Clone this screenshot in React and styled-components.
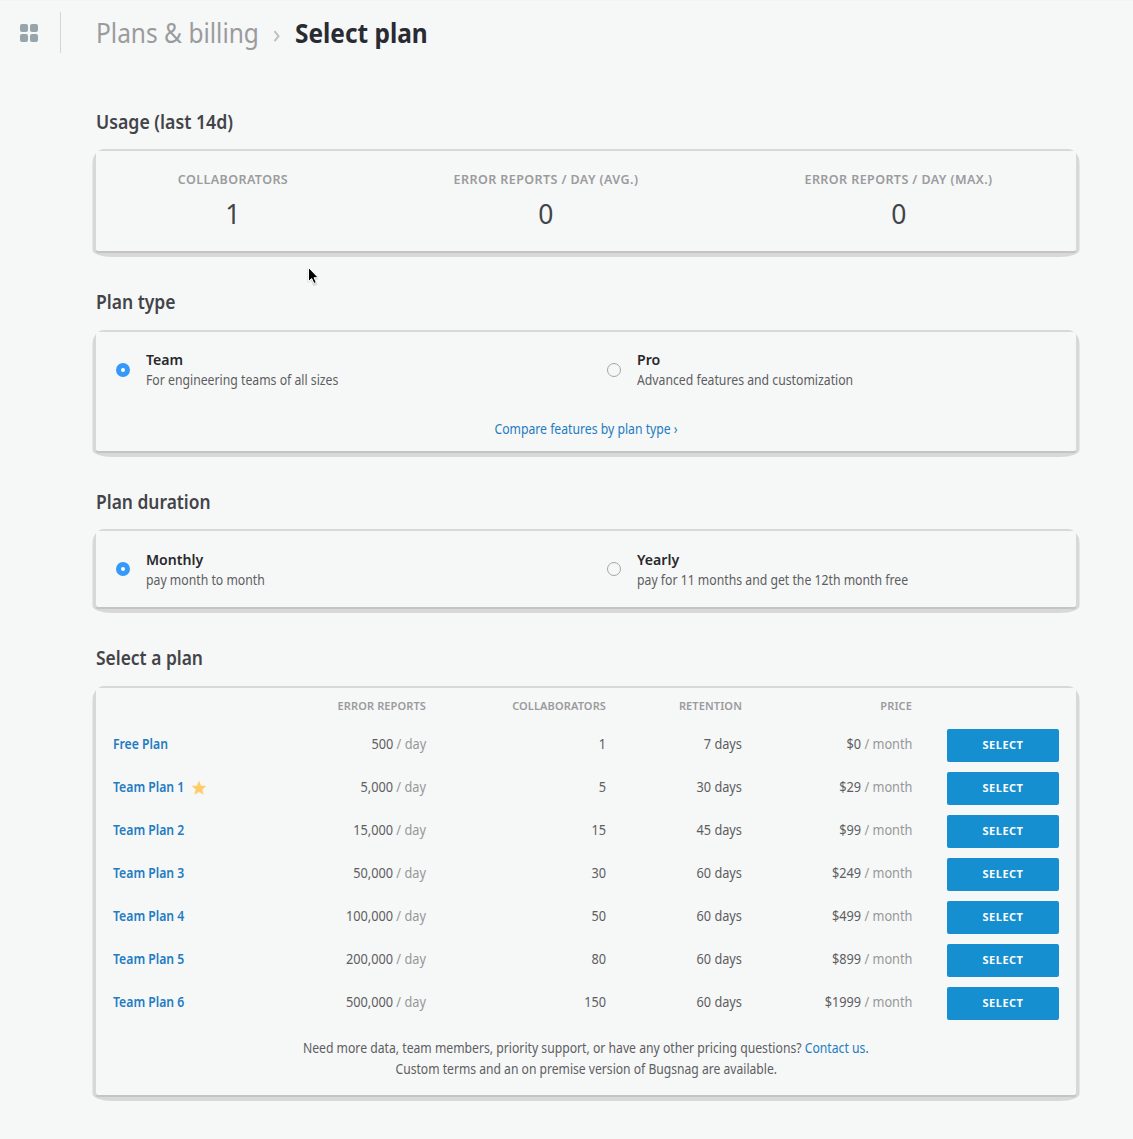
import React from "react";
import styled, { createGlobalStyle } from "styled-components";

const GlobalStyle = createGlobalStyle`
  * { box-sizing: border-box; }
  body {
    margin: 0;
    background: #f6f7f7;
    color: #5d5e62;
    font-family: "Noto Sans", "Open Sans", sans-serif;
    font-size: 14px;
    line-height: 21px;
  }
`;

const Page = styled.div`
  position: relative;
  width: 1133px;
  min-height: 1139px;
  overflow: hidden;
  border-top: 1px solid #f3f5f5;
`;

/* Narrowed text: keeps the full letter height at a condensed width. */
const Narrow = styled.span`
  display: inline-block;
  white-space: nowrap;
  transform: scaleX(${(p) => p.$by || 0.872});
  transform-origin: ${(p) => p.$from || "left"} center;
`;

const TopBar = styled.header`
  display: flex;
  align-items: center;
  height: 64px;
  padding-left: 20px;
`;

const MenuButton = styled.div`
  display: grid;
  grid-template-columns: 8px 8px;
  grid-auto-rows: 8px;
  gap: 2px;
  width: 18px;
`;

const MenuTile = styled.i`
  background: #98a4ab;
  border-radius: 2px;
`;

const Divider = styled.div`
  width: 1px;
  height: 41px;
  margin: 0 35px 2px 22px;
  background: #d3d5d6;
`;

const Breadcrumb = styled.nav`
  display: flex;
  align-items: center;
  font-size: 27px;
  line-height: 36px;
  color: #9b9b9e;
`;

const Crumb = styled.div`
  width: 176px;
`;

const Chevron = styled.svg`
  width: 10px;
  height: 14px;
  margin: 5px 13px 0 0;
`;

const Current = styled.h1`
  margin: 0;
  font: inherit;
  font-weight: 700;
  color: #292b33;
`;

const Main = styled.main`
  width: 988px;
  margin-left: 92px;
`;

const Section = styled.section`
  padding-top: ${(p) => p.$top}px;
`;

const Heading = styled.h2`
  margin: 0 0 ${(p) => p.$gap || 15}px 4px;
  font-size: 20px;
  line-height: 26px;
  font-weight: 600;
  color: #434449;
`;

const CardEdge = styled.div`
  padding: 2px 4px 6px;
  border-radius: 12px 12px 20px 20px / 16px 16px 8px 8px;
  background: linear-gradient(90deg, #e6e6e7 1px, #d8d8d9 1px, #d8d8d9 987px, #e6e6e7 987px);
`;

const Card = styled.div`
  height: ${(p) => p.$height}px;
  border-radius: 2px;
  background: #f6f7f7;
  box-shadow: 0 2px 0 #c4c4c6;
`;

const Stats = styled(Card)`
  display: grid;
  grid-template-columns: 274px 352px 353px;
  padding-top: 18px;
  text-align: center;
`;

const StatLabel = styled.div`
  font-size: 12.5px;
  line-height: 22px;
  font-weight: 600;
  letter-spacing: 0.42px;
  color: #9b9b9e;
`;

const StatValue = styled.div`
  margin-top: 5px;
  font-size: 27px;
  line-height: 36px;
  color: #434449;
`;

const Options = styled.div`
  display: grid;
  grid-template-columns: 491px 489px;
  padding-top: ${(p) => p.$top}px;
`;

const Option = styled.label`
  display: flex;
  align-items: center;
  padding-left: 20px;
`;

const Radio = styled.i`
  flex: none;
  width: 14px;
  height: 14px;
  margin: ${(p) => p.$shift || 0}px 16.4px 0 0;
  border-radius: 50%;
  border: ${(p) => (p.$checked ? "5px solid #3598fb" : "1px solid #a5a5a8")};
  background: ${(p) => (p.$checked ? "#fff" : "transparent")};
`;

const OptionName = styled.div`
  font-size: 15px;
  line-height: 21px;
  font-weight: 600;
  color: #27282c;
`;

const OptionNote = styled.div`
  line-height: 19px;
  padding-bottom: 2px;
`;

const Link = styled.a`
  color: #237cc2;
`;

const Compare = styled.div`
  padding-top: 27px;
  text-align: center;
`;

const TableHead = styled.div`
  display: grid;
  grid-template-columns: 313px 180px 136px 170px 112px;
  height: 36px;
  padding-left: 17px;
  font-size: 11px;
  line-height: 36px;
  font-weight: 600;
  letter-spacing: 0.12px;
  text-align: right;
  color: #9b9b9e;
`;

const Row = styled.div`
  display: grid;
  grid-template-columns: 200px 113px 180px 136px 170px 112px;
  align-items: center;
  height: 43px;
  padding-left: 17px;
`;

const PlanName = styled.div`
  display: flex;
  align-items: center;
  font-weight: 600;
  line-height: 20px;
  padding-bottom: 3px;
`;

const StarIcon = styled.svg`
  width: 14px;
  height: 14px;
  margin: 1px 0 0 -3px;
`;

const Cell = styled.div`
  text-align: right;
  line-height: 20px;
  padding-bottom: 3px;
`;

const Unit = styled.span`
  color: #97979a;
`;

const SelectButton = styled.button`
  width: 112px;
  height: 33px;
  margin-left: 35px;
  padding: 0 0 2px;
  border: 0;
  border-radius: 2px;
  background: #168fd1;
  color: #fff;
  font: 700 11px/31px "Noto Sans", sans-serif;
  letter-spacing: 0.5px;
`;

const Footnote = styled.div`
  padding-top: 12px;
  text-align: center;
`;

const Pointer = styled.svg`
  position: absolute;
  left: 306px;
  top: 264px;
`;

const stats = [
  ["COLLABORATORS", "1"],
  ["ERROR REPORTS / DAY (AVG.)", "0"],
  ["ERROR REPORTS / DAY (MAX.)", "0"],
];

const plans = [
  ["Free Plan", "500", "1", "7 days", "$0"],
  ["Team Plan 1", "5,000", "5", "30 days", "$29"],
  ["Team Plan 2", "15,000", "15", "45 days", "$99"],
  ["Team Plan 3", "50,000", "30", "60 days", "$249"],
  ["Team Plan 4", "100,000", "50", "60 days", "$499"],
  ["Team Plan 5", "200,000", "80", "60 days", "$899"],
  ["Team Plan 6", "500,000", "150", "60 days", "$1999"],
];

function Choice({ name, note, checked, shift }) {
  return (
    <Option>
      <Radio $checked={checked} $shift={shift} />
      <div>
        <OptionName><Narrow $by={0.94}>{name}</Narrow></OptionName>
        <OptionNote><Narrow $by={0.874}>{note}</Narrow></OptionNote>
      </div>
    </Option>
  );
}

function Value({ children }) {
  return <Cell><Narrow $by={0.91} $from="right">{children}</Narrow></Cell>;
}

export default function App() {
  return (
    <Page>
      <GlobalStyle />
      <TopBar>
        <MenuButton><MenuTile /><MenuTile /><MenuTile /><MenuTile /></MenuButton>
        <Divider />
        <Breadcrumb>
          <Crumb><Narrow $by={0.907}>Plans &amp; billing</Narrow></Crumb>
          <Chevron viewBox="0 0 10 14">
            <path d="M2.500 2.200 6.500 7.200 2.500 12.200" fill="none" stroke="#c0c0c2" strokeWidth="2" />
          </Chevron>
          <Current><Narrow $by={0.905}>Select plan</Narrow></Current>
        </Breadcrumb>
      </TopBar>
      <Main>
        <Section $top={44}>
          <Heading $gap={14}><Narrow $by={0.885}>Usage (last 14d)</Narrow></Heading>
          <CardEdge>
            <Stats $height={100}>
              {stats.map(([label, value]) => (
                <div key={label}>
                  <StatLabel>{label}</StatLabel>
                  <StatValue><Narrow $by={0.98} $from="center">{value}</Narrow></StatValue>
                </div>
              ))}
            </Stats>
          </CardEdge>
        </Section>
        <Section $top={32}>
          <Heading><Narrow $by={0.875}>Plan type</Narrow></Heading>
          <CardEdge>
            <Card $height={119}>
              <Options $top={17}>
                <Choice name="Team" note="For engineering teams of all sizes" checked />
                <Choice name="Pro" note="Advanced features and customization" />
              </Options>
              <Compare><Link><Narrow $from="center">Compare features by plan type ›</Narrow></Link></Compare>
            </Card>
          </CardEdge>
        </Section>
        <Section $top={32}>
          <Heading $gap={14}><Narrow $by={0.87}>Plan duration</Narrow></Heading>
          <CardEdge>
            <Card $height={76}>
              <Options $top={18}>
                <Choice name="Monthly" note="pay month to month" shift={-2} checked />
                <Choice name="Yearly" note="pay for 11 months and get the 12th month free" shift={-2} />
              </Options>
            </Card>
          </CardEdge>
        </Section>
        <Section $top={32}>
          <Heading><Narrow $by={0.87}>Select a plan</Narrow></Heading>
          <CardEdge>
            <Card $height={407}>
              <TableHead>
                <div>ERROR REPORTS</div>
                <div>COLLABORATORS</div>
                <div>RETENTION</div>
                <div>PRICE</div>
              </TableHead>
              {plans.map(([name, reports, people, retention, price], i) => (
                <Row key={name}>
                  <PlanName>
                    <Link><Narrow>{name}</Narrow></Link>
                    {i === 1 && (
                      <StarIcon viewBox="0 0 14 14">
                        <path d="M7 .3 8.9 4.9 13.8 5.2 10 8.4 11.2 13.3 7 10.6 2.8 13.3 4 8.4 .2 5.2 5.1 4.9Z" fill="#ffcb66" stroke="#ffcb66" strokeWidth=".5" />
                      </StarIcon>
                    )}
                  </PlanName>
                  <Value>{reports}<Unit> / day</Unit></Value>
                  <Value>{people}</Value>
                  <Value>{retention}</Value>
                  <Value>{price}<Unit> / month</Unit></Value>
                  <SelectButton>SELECT</SelectButton>
                </Row>
              ))}
              <Footnote>
                <div>
                  <Narrow $by={0.871} $from="center">
                    Need more data, team members, priority support, or have any other pricing questions? <Link>Contact us</Link>.
                  </Narrow>
                </div>
                <div>
                  <Narrow $by={0.866} $from="center">Custom terms and an on premise version of Bugsnag are available.</Narrow>
                </div>
              </Footnote>
            </Card>
          </CardEdge>
        </Section>
      </Main>
      <Pointer width="16" height="22" viewBox="0 0 16 22">
        <path d="M1.500 3v15l3.500-2.500 2.500 5.500 4-1.500-2-5h3Z" fill="#b9babb" opacity=".55" />
        <path d="M2.500 2.500v14l3.200-3 2.200 5 2.400-1-2.200-4.800h4.200Z" fill="#000" stroke="#fff" strokeWidth="1" />
      </Pointer>
    </Page>
  );
}
